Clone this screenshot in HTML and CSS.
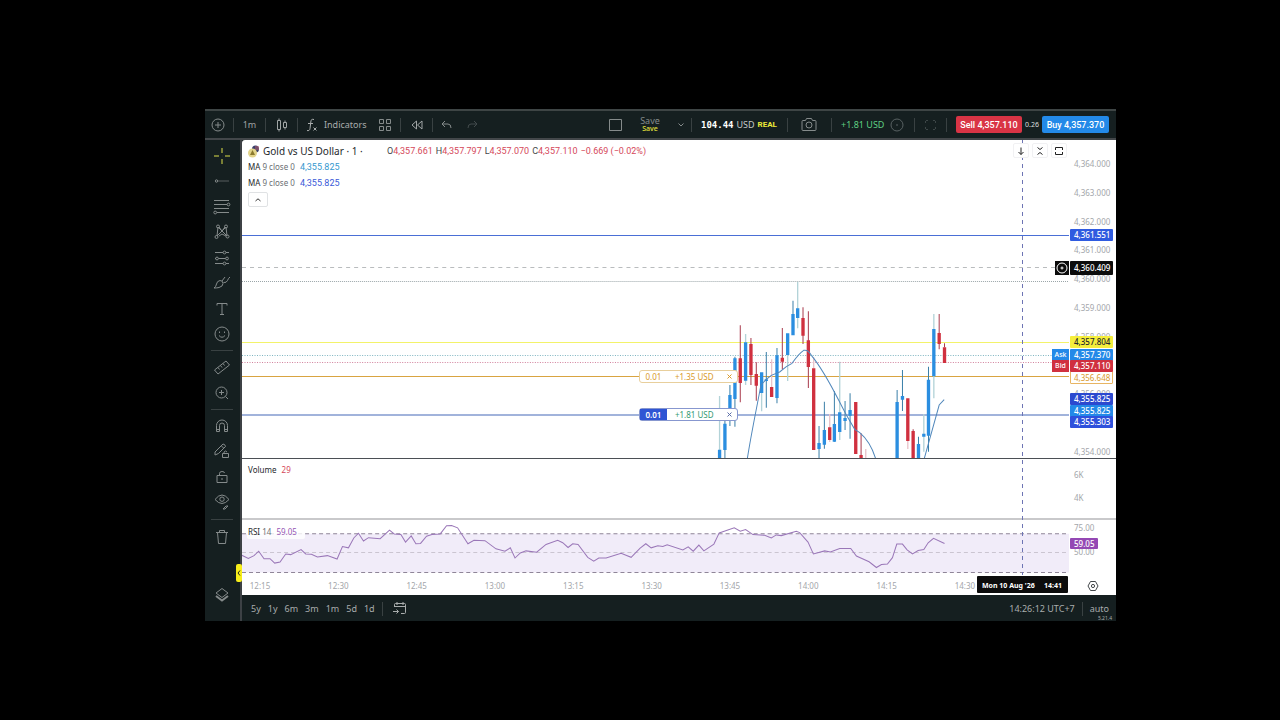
FILE: index.html
```html
<!DOCTYPE html>
<html lang="en">
<head>
<meta charset="utf-8">
<title>Gold vs US Dollar</title>
<link rel="stylesheet" href="styles.css">
</head>
<body>
<main class="app">
  <header class="toolbar">
    <button class="tool add" aria-label="Add symbol"><svg width="14" height="14" viewBox="0 0 14 14"><circle cx="7" cy="7" r="6"/><path d="M7 4v6M4 7h6"/></svg></button>
    <i class="sep"></i>
    <button class="tool slot">1m</button>
    <i class="sep"></i>
    <button class="tool slot" aria-label="Candles"><svg width="12" height="14" viewBox="0 0 12 14"><path d="M1.500 2.500h3v9h-3zM3 .5v2M3 11.500v2M7.500 4.500h3v5h-3zM9 2.500v2M9 9.500v2"/></svg></button>
    <i class="sep"></i>
    <button class="tool indicators"><svg width="12" height="14" viewBox="0 0 12 14"><path d="M8 1.500C5.500.8 5 2 4.800 4L4 10.500C3.800 12.500 2.500 13 1 12.500M2 5.500h5M7.500 9.500l3 3M10.500 9.500l-3 3"/></svg>Indicators</button>
    <button class="tool layouts" aria-label="Templates"><svg width="12" height="12" viewBox="0 0 12 12"><path d="M.5.5h4v4h-4zM7.500.5h4v4h-4zM.5 7.500h4v4h-4zM7.500 7.500h4v4h-4z"/></svg></button>
    <i class="sep"></i>
    <button class="tool slot" aria-label="Replay"><svg width="12" height="10" viewBox="0 0 12 10"><path d="M5.500 1v8L1 5zM11 1v8L6.500 5z"/></svg></button>
    <i class="sep"></i>
    <button class="tool undo" aria-label="Undo"><svg width="12" height="10" viewBox="0 0 12 10"><path d="M4 1L1 4l3 3M1 4h6q3 0 3 4"/></svg></button>
    <button class="tool redo" aria-label="Redo"><svg width="12" height="10" viewBox="0 0 12 10"><path d="M8 1l3 3-3 3M11 4H5Q2 4 2 8"/></svg></button>
    <span class="grow"></span>
    <button class="tool square" aria-label="Layout"><svg width="14" height="12" viewBox="0 0 14 12"><path d="M.5.5h12v11H.5z"/></svg></button>
    <button class="tool save">Save<small>Save</small></button>
    <button class="tool menu" aria-label="Save menu"><svg width="6" height="4" viewBox="0 0 6 4"><path d="M.5.5L3 3 5.500.5"/></svg></button>
    <i class="sep"></i>
    <div class="account"><b>104.44</b><span>USD</span><strong>REAL</strong></div>
    <i class="sep"></i>
    <button class="tool camera" aria-label="Snapshot"><svg width="16" height="13" viewBox="0 0 16 13"><path d="M1 3.500q0-1 1-1h2.500l1-2h5l1 2H14q1 0 1 1v8q0 1-1 1H2q-1 0-1-1z"/><circle cx="8" cy="7" r="3"/></svg></button>
    <i class="sep"></i>
    <div class="profit">+1.81 USD</div>
    <button class="tool close-all" aria-label="Positions"><svg width="14" height="14" viewBox="0 0 14 14"><circle cx="7" cy="7" r="6"/><path d="M6 7h2"/></svg></button>
    <i class="sep"></i>
    <button class="tool slot faint" aria-label="Fullscreen"><svg width="11" height="10" viewBox="0 0 11 10"><path d="M.5 3V.5H3M8 .5h2.500V3M10.500 7v2.500H8M3 9.500H.5V7" stroke-dasharray="2 1"/></svg></button>
    <i class="sep"></i>
    <button class="trade sell">Sell 4,357.110</button>
    <span class="spread">0.26</span>
    <button class="trade buy">Buy 4,357.370</button>
  </header>

  <div class="body">
    <nav class="sidebar">
      <div class="group lines">
        <button class="tool active" aria-label="Cross"><svg width="16" height="16" viewBox="0 0 16 16"><path d="M8 0v5M8 11v5M0 8h5M11 8h5M8 8h.1"/></svg></button>
        <button class="tool" aria-label="Trend line"><svg width="16" height="16" viewBox="0 0 16 16"><circle cx="2.500" cy="8" r="1.200"/><path d="M4 8H15" opacity=".6"/></svg></button>
        <button class="tool" aria-label="Fibonacci"><svg width="18" height="16" viewBox="0 0 18 16"><path d="M1 1.500h15M1 5.500h13M1 9.500h15M4 13.500h12"/><circle cx="15.500" cy="5.500" r="1.400"/><circle cx="2.200" cy="13.500" r="1.400"/></svg></button>
        <button class="tool" aria-label="Patterns"><svg width="16" height="16" viewBox="0 0 16 16"><path d="M3 12L4 3l9 9-1-9-9 9M5 3l3 4 3-4M5 12l3-2 4 2"/><circle cx="4" cy="2.500" r="1.500"/><circle cx="12" cy="2.500" r="1.500"/><circle cx="2.500" cy="13" r="1.500"/><circle cx="13.500" cy="12.500" r="1.500"/></svg></button>
        <button class="tool" aria-label="Forecast"><svg width="16" height="16" viewBox="0 0 16 16"><path d="M1 2.500h8M12 2.500h3M1 8.500h1M4.500 8.500h7M1 13.500h8M12 13.500h3" /><circle cx="10.500" cy="2.500" r="1.400"/><circle cx="3" cy="8.500" r="1.400"/><circle cx="13" cy="8.500" r="1.400"/><circle cx="10.500" cy="13.500" r="1.400"/></svg></button>
        <button class="tool" aria-label="Brush"><svg width="18" height="16" viewBox="0 0 18 16"><path d="M1 13q2-1 2.500-4T7 5.500q3 0 3 3t-4 4q-2 .5-5 .5zM9 6l3-4M10.500 7.500q3 .5 4-2T17 2"/></svg></button>
        <button class="tool" aria-label="Text"><svg width="14" height="16" viewBox="0 0 14 16"><path d="M2 4.500v-2h10v2M7 2.500v11M5 13.500h4"/></svg></button>
        <button class="tool" aria-label="Emoji"><svg width="16" height="16" viewBox="0 0 16 16"><circle cx="8" cy="8" r="7"/><path d="M5 9.500q3 3.500 6 0M5.500 5.500v1.500M10.500 5.500v1.500"/></svg></button>
      </div>
      <i class="rule"></i>
      <div class="group zooming">
        <button class="tool" aria-label="Measure"><svg width="16" height="16" viewBox="0 0 16 16"><path d="M.5 11L12 2l3.500 4L4 15zM4 8.500L5.500 10.500M6.500 6.500L8 8.500M9 4.500l1.500 2"/></svg></button>
        <button class="tool" aria-label="Zoom in"><svg width="16" height="16" viewBox="0 0 16 16"><circle cx="7.500" cy="7.500" r="5.500"/><path d="M7.500 5v5M5 7.500h5M11.500 11.500L14 14"/></svg></button>
      </div>
      <i class="rule"></i>
      <div class="group locks">
        <button class="tool" aria-label="Magnet"><svg width="14" height="14" viewBox="0 0 14 14"><path d="M1.500 12.500V6.500a5.500 5.500 0 0 1 11 0v6H9.500v-6a2.500 2.500 0 0 0-5 0v6zM1.500 10.500h3M9.500 10.500h3"/></svg></button>
        <button class="tool" aria-label="Drawing mode"><svg width="16" height="16" viewBox="0 0 16 16"><path d="M1 12V9L9 1q2 0 2.500 2.500L4.500 10.500zM7.500 3l2 2M8.500 10.500h6v4h-6zM10 10.500V9q1.500-2 3 0"/></svg></button>
        <button class="tool" aria-label="Lock"><svg width="14" height="16" viewBox="0 0 14 16"><path d="M2 6.500h10v7H2zM4.500 6.500V4.500q0-2 2.500-2t2.500 1.500M7 9v2"/></svg></button>
        <button class="tool" aria-label="Hide"><svg width="16" height="18" viewBox="0 0 16 18"><path d="M1 6.500Q8-2.500 15 6.500 8 14.500 1 6.500zM9 16l3-3 2 0-3 3z"/><circle cx="8" cy="6.200" r="2.200"/></svg></button>
      </div>
      <i class="rule"></i>
      <button class="tool trash" aria-label="Remove"><svg width="14" height="16" viewBox="0 0 14 16"><path d="M1 3.500h12M4.500 3.500v-2h5v2M2.500 3.500l1 11h7l1-11"/></svg></button>
      <span class="grow"></span>
      <button class="tool layers" aria-label="Object tree"><svg width="14" height="16" viewBox="0 0 14 16"><path d="M7 1.500l6 4.500-6 4.500L1 6z"/><path d="M1 9l6 4.500L13 9" stroke-width="2"/></svg></button>
      <button class="handle" aria-label="Collapse toolbar"><svg width="4" height="6" viewBox="0 0 4 6"><path d="M3 .5L1 3l2 2.500"/></svg></button>
    </nav>

    <div class="workspace">
      <section class="chart">
        <div class="pane price">
          <svg class="plot" viewBox="0 0 826 318" preserveAspectRatio="none">
            <g class="levels">
              <path d="M0 95.500h826" stroke="#4a6fd6"/>
              <path d="M0 127.500h813" stroke="#b9bcbe" stroke-dasharray="4 4"/>
              <path d="M0 141.500h826" stroke="#9aa5a8" stroke-dasharray="1 1"/>
              <path d="M0 202.500h826" stroke="#f3f36a"/>
              <path d="M0 215.500h826" stroke="#7db4c0" stroke-dasharray="1 1.500"/>
              <path d="M0 222.500h826" stroke="#d2809c" stroke-dasharray="1 1.500"/>
              <path d="M0 236.500h826" stroke="#d9a441"/>
              <path d="M0 275h826" stroke="#4569b8"/>
            </g>
            <g transform="translate(387 130) scale(.33333)" fill="none">
              <path stroke="#b3d3d8" stroke-width="4" d="M270 378V540M348 192V345M396 369V424M474 255V333M504 36V175M630 275V510M882 432V545M912 132V385"/>
              <path stroke="#e8c3ca" stroke-width="4" d="M426 268V351M552 262V295M600 432V516M708 537V567M834 513V537"/>
              <path stroke="#3a7fa8" stroke-width="3" d="M286 440V567M301 345V468M316 260V470M410 246V413M442 234V400M490 92V132M568 468V567M584 395V536M614 363V515M646 393V480M661 370V506M802 360V396M818 300V423M866 500V522M896 290V545"/>
              <path stroke="#a83a4c" stroke-width="3" d="M332 166V397M364 204V345M380 277V392M458 174V298M520 112V222M536 124V354M694 490V555M850 478V483M928 132V238M944 220V232"/>
              <path stroke="#2b8ee0" stroke-width="10" d="M270 539V567M286 461V540M301 375V450M316 265V387M348 217V332M396 307V369M410 328V333M442 256V384M474 190V255M490 132V196M504 115V144M568 519V537M584 480V524M614 462V515M630 427V486M646 444V453M661 420V437M802 396V567M818 378V389M866 522V567M882 491V500M896 329V497M912 177V319"/>
              <path stroke="#d0303f" stroke-width="10" d="M332 265V339M364 222V315M380 312V347M426 351V381M458 263V275M520 144V197M536 211V291M552 295V540M600 472V510M678 396V552M694 555V567M834 385V513M850 483V567M928 189V222M944 232V279"/>
              <path stroke="#5087bb" stroke-width="3" d="M353 567C365 490 380 420 394 345L410 328 425 316 450 306 470 290 487 280Q508 250 522 241 535 238 545 256C590 310 620 380 650 435L675 478 690 488Q722 515 738 567M883 567L896 520 928 405 943 389"/>
            </g>
          </svg>
          <div class="legend">
            <h1><svg width="12" height="13" viewBox="0 0 12 13"><circle cx="7.500" cy="4" r="3.500" fill="#3b3f6b"/><path d="M7 2h4M7 4h4" stroke="#b9606c"/><circle cx="4.500" cy="8" r="4.500" fill="#e3d48a"/><path d="M4.500 5l2.500 5H2z" fill="#8c7a2e"/></svg>Gold vs US Dollar · 1 ·</h1>
            <p class="ohlc"><span>O<em>4,357.661</em></span><span>H<em>4,357.797</em></span><span>L<em>4,357.070</em></span><span>C<em>4,357.110</em></span><em>−0.669 (−0.02%)</em></p>
          </div>
          <p class="study">MA <span>9 close 0</span> <em class="sky">4,355.825</em></p>
          <p class="study">MA <span>9 close 0</span> <em class="royal">4,355.825</em></p>
          <button class="fold" aria-label="Collapse legend"><svg width="6" height="4" viewBox="0 0 6 4"><path d="M.5 3L3 .8 5.500 3"/></svg></button>
          <div class="pane-tools">
            <button aria-label="Move down"><svg width="8" height="8" viewBox="0 0 8 8"><path d="M4 .5v7M1.500 5L4 7.500 6.500 5"/></svg></button>
            <button aria-label="Collapse"><svg width="8" height="8" viewBox="0 0 8 8"><path d="M1.500.5L4 2.500 6.500.5M1.500 7.500L4 5.500 6.500 7.500"/></svg></button>
            <button aria-label="Maximize"><svg width="8" height="8" viewBox="0 0 8 8"><path d="M.5 3V.5h7V3M.5 5v2.500h7V5"/></svg></button>
          </div>
          <div class="order pending"><b>0.01</b><span>+1.35 USD</span><button aria-label="Cancel order"><svg width="5" height="5" viewBox="0 0 5 5"><path d="M.5.5l4 4M4.500.5l-4 4"/></svg></button></div>
          <div class="order open"><b>0.01</b><span>+1.81 USD</span><button aria-label="Close position"><svg width="5" height="5" viewBox="0 0 5 5"><path d="M.5.5l4 4M4.500.5l-4 4"/></svg></button></div>
        </div>
        <div class="axis price-axis">
          <span>4,364.000</span><span>4,363.000</span><span>4,362.000</span><span>4,361.000</span><span>4,360.000</span><span>4,359.000</span><span>4,358.000</span><span>4,357.000</span><span>4,356.000</span><span>4,355.000</span><span>4,354.000</span>
          <b class="tag level-a">4,361.551</b>
          <b class="tag cursor"><button class="side" aria-label="Add alert"><svg width="12" height="12" viewBox="0 0 12 12"><circle cx="6" cy="6" r="5"/><path d="M6 4.500v3M4.500 6h3"/></svg></button>4,360.409</b>
          <b class="tag alert">4,357.804</b>
          <b class="tag pend">4,356.648</b>
          <b class="tag ask"><span class="side">Ask</span>4,357.370</b>
          <b class="tag bid"><span class="side">Bid</span>4,357.110</b>
          <b class="tag ma-a">4,355.825</b>
          <b class="tag ma-b">4,355.825</b>
          <b class="tag entry">4,355.303</b>
        </div>

        <div class="pane volume"><p class="study">Volume <em class="red">29</em></p></div>
        <div class="axis volume-axis"><span>6K</span><span>4K</span></div>

        <div class="pane rsi">
          <svg class="plot" viewBox="0 0 826 55" preserveAspectRatio="none">
            <path d="M0 13.500h826v38H0z" fill="#f1ecf9" stroke="none"/>
            <path d="M0 13.500h826M0 51.500h826" stroke="#8f8598" stroke-dasharray="4 3"/>
            <path d="M0 32h826" stroke="#cbc5d1" stroke-dasharray="4 3"/>
            <path transform="translate(-3 -65) scale(.33333)" fill="none" stroke="#9a77b8" stroke-width="3" d="M6 298L28 308 45 300 59 287 75 309 93 309 107 322 123 319 140 295 155 297 186 282 200 295 217 296 235 304 265 300 294 310 310 273 328 277 344 248 358 234 373 257 388 247 423 250 451 225 465 236 485 238 499 260 516 242 530 265 544 264 562 243 578 238 603 236 622 212 637 211 655 218 686 265 704 255 737 256 770 280 797 287 813 277 827 307 843 292 860 286 892 290 920 267 955 255 970 262 986 276 1000 265 1016 267 1045 305 1063 316 1078 307 1100 307 1145 293 1175 305 1202 278 1219 265 1235 277 1255 271 1270 273 1283 268 1330 283 1346 274 1361 287 1378 269 1393 286 1423 266 1439 233 1484 218 1502 228 1518 223 1540 238 1575 240 1595 248 1610 239 1625 241 1670 228 1680 232 1705 260 1721 295 1755 286 1772 289 1800 279 1833 279 1850 301 1888 318 1910 335 1925 326 1943 325 1958 306 1971 266 1988 266 2002 283 2018 295 2035 285 2052 282 2065 262 2081 249 2114 264"/>
          </svg>
          <p class="study">RSI <span>14</span> <em class="purple">59.05</em></p>
        </div>
        <div class="axis rsi-axis"><span>75.00</span><span>50.00</span><b class="tag rsi-tag">59.05</b></div>

        <div class="times"><span>12:15</span><span>12:30</span><span>12:45</span><span>13:00</span><span>13:15</span><span>13:30</span><span>13:45</span><span>14:00</span><span>14:15</span><span>14:30</span>
          <b class="time-tag"><span>Mon 10 Aug '26</span><span>14:41</span></b>
        </div>
        <button class="settings" aria-label="Chart settings"><svg width="12" height="12" viewBox="0 0 12 12"><path d="M3.500 1.500h5L11 6 8.500 10.500h-5L1 6z"/><circle cx="6" cy="6" r="1.600"/></svg></button>
        <i class="crosshair"></i>
      </section>

      <footer class="ranges">
        <button>5y</button><button>1y</button><button>6m</button><button>3m</button><button>1m</button><button>5d</button><button>1d</button>
        <i class="sep"></i>
        <button class="goto" aria-label="Go to date"><svg width="14" height="13" viewBox="0 0 14 13"><path d="M1.500 5V2.500q0-1 1-1h9q1 0 1 1v8q0 1-1 1H8M1.500 4.500h11M4 0v3M10 0v3M0 9.500h5.500M3.500 7.500l2 2-2 2"/></svg></button>
        <span class="grow"></span>
        <time>14:26:12 UTC+7</time>
        <i class="sep"></i>
        <button class="auto">auto</button>
        <small class="version">5.21.4</small>
      </footer>
    </div>
  </div>
</main>
</body>
</html>
```
FILE: styles.css
```css
* { box-sizing: border-box; }
html, body { height: 100%; }
body {
  margin: 0;
  padding: 109px 164px 99px 205px;
  background: #000;
  font-family: "Noto Sans", "Open Sans", sans-serif;
  font-size: 9px;
  line-height: 12px;
  color: #a9adad;
}
button { margin: 0; padding: 0; border: 0; background: none; color: inherit; font: inherit; cursor: pointer; }
svg { display: block; fill: none; stroke: currentColor; flex: none; }
p, h1 { margin: 0; font-weight: 400; }
em { font-style: normal; }
.grow { flex: 1; }

.app { display: flex; flex-direction: column; height: 100%; min-height: 512px; background: #151f20; }

/* top toolbar */
.toolbar { display: flex; align-items: center; height: 31px; flex: none; border-top: 2px solid #3e4545; border-bottom: 2px solid #43474a; padding-right: 7px; white-space: nowrap; }
.tool { display: flex; align-items: center; justify-content: center; color: #858b8b; }
.sep { width: 1px; height: 14px; background: #394142; flex: none; }
.add { width: 28px; padding-right: 3px; }
.slot { width: 31px; color: #a0a5a5; }
.indicators { width: 67px; padding-left: 8px; gap: 6px; color: #a9adad; justify-content: flex-start; }
.layouts { width: 35px; padding-left: 4px; }
.undo { width: 28px; }
.redo { width: 22px; color: #434b4c; }
.square { width: 28px; }
.save { width: 40px; flex-direction: column; line-height: 9px; }
.save small { font-size: 7px; line-height: 8px; font-weight: 500; color: #e6e23c; }
.menu { width: 21px; }
.account { display: flex; width: 95px; padding-left: 9px; gap: 3px; color: #c5c9c9; }
.account b { color: #fff; font-family: "DejaVu Sans Mono", monospace; }
.account strong { color: #ece83a; font-family: Roboto, sans-serif; font-size: 8px; }
.account span { width: 18px; }
.camera { width: 43px; padding-right: 2px; }
.profit { width: 54px; padding-left: 9px; color: #5fd083; }
.close-all { width: 28px; padding-right: 6px; color: #586162; }
.faint { color: #3d4647; }
.trade { height: 17px; border-radius: 2px; color: #fff; font-family: Roboto, sans-serif; font-weight: 500; }
.sell { width: 66px; margin-left: 9px; background: #d93445; }
.buy { width: 67px; background: #2389e8; }
.spread { width: 20px; text-align: center; font-size: 7px; color: #dcdfdf; }

.body { display: flex; flex: 1; min-height: 0; }

/* drawing tools */
.sidebar { position: relative; display: flex; flex-direction: column; align-items: center; width: 37px; padding: 3px 1px 14px 0; border-right: 2px solid #3d4145; }
.group { display: flex; flex-direction: column; justify-content: space-between; }
.sidebar .tool { width: 34px; height: 25px; flex: none; }
.lines { height: 204px; }
.zooming { height: 51px; margin-top: 3px; }
.locks { height: 102px; margin-top: 3px; }
.rule { width: 22px; height: 1px; margin-top: 4px; background: #394142; flex: none; }
.lines + .rule { margin-top: 3px; }
.sidebar .active { color: #dde04a; }
.trash { margin-top: 4px; }
.handle { position: absolute; right: -2px; bottom: 39px; display: grid; place-items: center; width: 6px; height: 18px; border-radius: 2px; background: #f7ee1a; color: #222; }

.workspace { display: flex; flex-direction: column; flex: 1; min-width: 0; }
.chart { position: relative; flex: 1; display: grid; grid-template-columns: minmax(0, 1fr) 47px; grid-template-rows: minmax(0, 1fr) 61px 56px 19px; background: #fff; color: #43474a; border-top-left-radius: 3px; }
.pane { position: relative; min-width: 0; }
.plot { position: absolute; inset: 0; width: 100%; height: 100%; }
.price, .price-axis { border-bottom: 1px solid #4b4f55; }
.volume, .volume-axis { border-bottom: 2px solid #c9c9cb; }

/* legends */
.legend { position: relative; display: flex; align-items: center; height: 19px; padding: 3px 0 0 6px; white-space: nowrap; }
.legend h1 { display: flex; align-items: center; gap: 3px; width: 139px; font-size: 10px; color: #25282c; }
.legend h1 svg { stroke: none; }
.ohlc { display: flex; gap: 3px; font-family: Roboto, sans-serif; }
.ohlc em { color: #d5485a; }
.study { position: relative; padding: 2px 0 2px 6px; font-size: 8px; color: #25282c; white-space: nowrap; }
.study span { color: #6b6f73; }
.study em { margin-left: 3px; }
.sky, .royal { font-family: Roboto, sans-serif; font-size: 9px; line-height: 8px; }
.sky { color: #3598cf; }
.royal { color: #3a59d8; }
.red { color: #d5485a; }
.purple { color: #9556b5; }
.fold { position: relative; display: grid; place-items: center; width: 20px; height: 15px; margin: 1px 0 0 6px; border: 1px solid #e0e2e4; border-radius: 2px; color: #333; }
.pane-tools { position: absolute; top: 3px; right: 2px; z-index: 2; display: flex; gap: 3px; }
.pane-tools button { display: grid; place-items: center; width: 16px; height: 15px; border: 1px solid #f1f1f3; border-radius: 2px; background: #fff; color: #222; }
.volume .study { padding-top: 5px; }
.rsi { padding-top: 5px; }
.rsi .study { width: 58px; padding: 1px 0 1px 1px; margin-left: 5px; border-radius: 2px; background: rgba(255, 255, 255, .8); }
.rsi .study em { margin-left: 3px; }

/* orders drawn on the chart */
.order { position: absolute; left: 48%; display: flex; align-items: center; width: 99px; height: 13px; border: 1px solid currentColor; border-radius: 3px; background: #fff; font-size: 8px; }
.order b { width: 27px; font-weight: 400; text-align: center; line-height: 11px; }
.order span { flex: 1; padding-left: 8px; }
.order button { width: 14px; display: grid; place-items: center; }
.pending { top: 230px; color: #d99a2b; border-color: #e8cf9c; }
.open { top: 268px; color: #5a6da8; border-color: #8797cf; }
.open b { background: #2f55d4; color: #fff; font-weight: 600; }
.open span { color: #349a72; }

/* scales */
.axis { position: relative; padding-left: 5px; font-size: 8px; color: #a3a6aa; }
.axis > span { display: block; height: 10px; line-height: 10px; }
.price-axis { display: flex; flex-direction: column; justify-content: space-between; padding-top: 19px; padding-bottom: 1px; }
.volume-axis { padding-top: 11px; }
.volume-axis span + span { margin-top: 13px; }
.rsi-axis { padding-top: 3px; }
.rsi-axis span + span { margin-top: 14px; }
.tag { position: absolute; left: 1px; width: 43px; height: 12px; padding-left: 4px; border-radius: 1px; line-height: 12px; font-weight: 500; color: #fff; }
.side { position: absolute; right: 100%; top: 0; height: 100%; width: 17px; margin-right: 1px; text-align: center; font-size: 7px; background: inherit; color: #fff; }
.level-a { top: 89px; background: #2f5be0; }
.cursor { top: 121px; height: 14px; line-height: 14px; background: #0c0c0c; }
.cursor .side { background: #0c0c0c; width: 14px; display: grid; place-items: center; }
.alert { top: 196px; background: #f5ee3c; color: #25282c; }
.ask { top: 209px; background: #2389e8; }
.bid { top: 220px; background: #d0303f; }
.pend { top: 231px; height: 13px; border: 1px solid #e8b563; padding-left: 3px; background: #fff; color: #d99a2b; font-weight: 400; }
.ma-a { top: 253px; background: #2c49cf; }
.ma-b { top: 265px; background: #2389e8; }
.entry { top: 276px; background: #2f51dc; }
.rsi-tag { top: 18px; width: 28px; height: 11px; line-height: 11px; background: #9448b4; }

.times { position: relative; display: flex; justify-content: space-between; padding: 4px 93px 0 7px; font-size: 8px; color: #a3a6aa; }
.times > span { width: 22px; text-align: center; }
.time-tag { position: absolute; top: 0; right: 1px; display: flex; justify-content: space-between; width: 91px; height: 17px; padding: 0 6px 0 5px; border-radius: 1px; background: #0c0c0c; color: #fff; font-size: 7px; line-height: 20px; white-space: nowrap; }
.settings { display: grid; place-items: center; }
.crosshair { position: absolute; top: 0; bottom: 20px; right: 93px; width: 1px; background: repeating-linear-gradient(#6d74b4 0 4px, transparent 4px 8px); }

/* date range bar */
.ranges { position: relative; display: flex; align-items: center; gap: 7px; height: 26px; flex: none; padding: 1px 7px 0 9px; white-space: nowrap; }
.ranges .goto { margin-left: 3px; }
.version { position: absolute; right: 4px; bottom: 0; font-size: 5px; line-height: 6px; }
```
